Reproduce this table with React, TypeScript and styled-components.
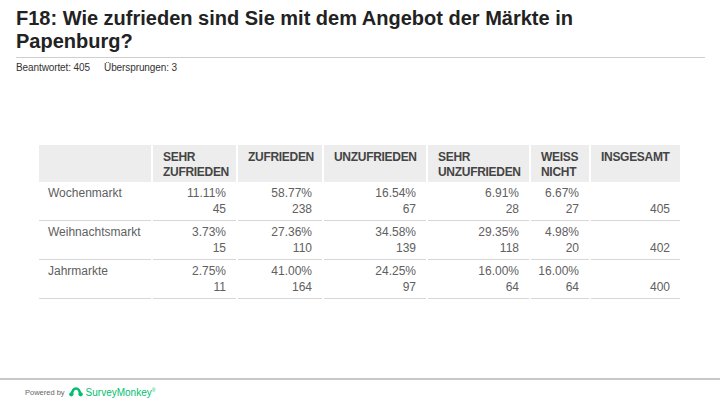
import styled, { createGlobalStyle } from "styled-components"

const GlobalStyle = createGlobalStyle`
    html, body {
        margin: 0;
        padding: 0;
        background: #ffffff;
    }
    body {
        font-family: "Liberation Sans", Arial, sans-serif;
    }
`

const Page = styled.div`
    display: flex;
    flex-direction: column;
    width: 720px;
    height: 405px;
    overflow: hidden;
    background: #ffffff;
`

const Title = styled.h1`
    margin: 0;
    padding: 7px 0 4px 16px;
    max-width: 600px;
    font-size: 20px;
    line-height: 23px;
    font-weight: bold;
    color: #222;
`

const Rule = styled.div`
    margin: 0 15px 0 16px;
    height: 1px;
    background: #cfcfcf;
`

const Meta = styled.div`
    display: flex;
    gap: 14px;
    margin: 4px 0 0 16px;
    font-size: 10px;
    line-height: 12px;
    color: #333;
    letter-spacing: -0.1px;
`

const Table = styled.div`
    margin: 71px 0 0 39px;
    width: 641px;
    font-size: 12px;
`

const Row = styled.div`
    display: grid;
    grid-template-columns: 112px 83px 84px 102px 101px 58px 89px;
    column-gap: 2px;
`

const HeadCell = styled.div`
    background: #ededed;
    padding: 5px 10px 2px;
    height: 30px;
    line-height: 15px;
    font-weight: bold;
    color: #444;
    letter-spacing: -0.3px;
`

const Cell = styled.div<{ $label?: boolean; $bottom?: boolean }>`
    display: flex;
    flex-direction: column;
    justify-content: ${p => (p.$bottom ? "flex-end" : "flex-start")};
    align-items: ${p => (p.$label ? "flex-start" : "flex-end")};
    padding: 3px 10px 3px ${p => (p.$label ? "9px" : "10px")};
    height: 32px;
    line-height: 16px;
    color: #606060;
    border-bottom: 1px solid #d8d8d8;
`

const Spacer = styled.div`
    flex: 1;
`

const Footer = styled.div`
    display: flex;
    align-items: center;
    gap: 4px;
    height: 25px;
    padding-left: 25px;
    border-top: 2px solid #c8c8c8;
`

const Powered = styled.span`
    font-size: 7.5px;
    color: #666;
`

const Brand = styled.span`
    display: flex;
    align-items: center;
    gap: 3px;
    font-size: 10px;
    color: #00bf6f;
    sup {
        font-size: 5px;
    }
`

type Data = { label: string; cells: [string, string][]; total: string }

const heads = ["SEHR ZUFRIEDEN", "ZUFRIEDEN", "UNZUFRIEDEN", "SEHR UNZUFRIEDEN", "WEISS NICHT", "INSGESAMT"]

const rows: Data[] = [
    {
        label: "Wochenmarkt",
        cells: [["11.11%", "45"], ["58.77%", "238"], ["16.54%", "67"], ["6.91%", "28"], ["6.67%", "27"]],
        total: "405",
    },
    {
        label: "Weihnachtsmarkt",
        cells: [["3.73%", "15"], ["27.36%", "110"], ["34.58%", "139"], ["29.35%", "118"], ["4.98%", "20"]],
        total: "402",
    },
    {
        label: "Jahrmarkte",
        cells: [["2.75%", "11"], ["41.00%", "164"], ["24.25%", "97"], ["16.00%", "64"], ["16.00%", "64"]],
        total: "400",
    },
]

function Logo() {
    return (
        <svg width="14" height="10" viewBox="0 0 14 10">
            <path d="M3 7.5 C3 3.5 5 1.5 7 1.5 C9 1.5 11 3.5 11 7.5" fill="none" stroke="#00bf6f" strokeWidth="2.6" />
            <circle cx="2.3" cy="7.3" r="2.1" fill="#00bf6f" />
            <circle cx="11.7" cy="7.3" r="2.1" fill="#00bf6f" />
        </svg>
    )
}

export default function App() {
    return (
        <>
            <GlobalStyle />
            <Page>
                <Title>F18: Wie zufrieden sind Sie mit dem Angebot der Märkte in Papenburg?</Title>
                <Rule />
                <Meta>
                    <span>Beantwortet: 405</span>
                    <span>Übersprungen: 3</span>
                </Meta>
                <Table>
                    <Row>
                        <HeadCell />
                        {heads.map(h => (
                            <HeadCell key={h}>{h}</HeadCell>
                        ))}
                    </Row>
                    {rows.map(r => (
                        <Row key={r.label}>
                            <Cell $label>{r.label}</Cell>
                            {r.cells.map(([pct, n], i) => (
                                <Cell key={i}>
                                    <span>{pct}</span>
                                    <span>{n}</span>
                                </Cell>
                            ))}
                            <Cell $bottom>{r.total}</Cell>
                        </Row>
                    ))}
                </Table>
                <Spacer />
                <Footer>
                    <Powered>Powered by</Powered>
                    <Brand>
                        <Logo />
                        <span>SurveyMonkey<sup>®</sup></span>
                    </Brand>
                </Footer>
            </Page>
        </>
    )
}
